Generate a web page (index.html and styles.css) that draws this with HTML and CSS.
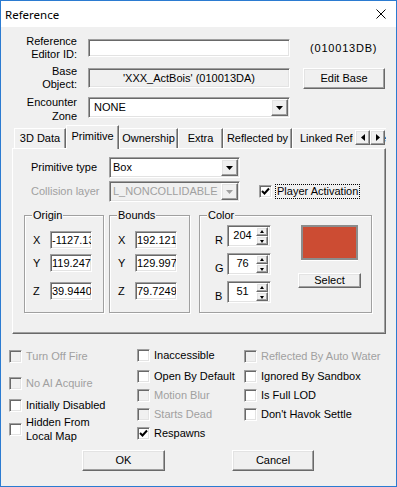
FILE: index.html
```html
<!DOCTYPE html>
<html lang="en">
<head>
  <meta charset="UTF-8" />
  <title>Reference</title>
  <link rel="stylesheet" href="styles.css">
</head>
<body>
  <div class="window">

    <!-- Title bar -->
    <div class="titlebar">
      <span class="title">Reference</span>
      <svg class="close" width="10" height="10" viewBox="0 0 10 10">
        <path d="M0.5 0.5 L9.5 9.5 M9.5 0.5 L0.5 9.5" stroke="#000" stroke-width="1" fill="none"/>
      </svg>
    </div>

    <div class="dialog">

      <!-- Reference fields -->
      <div class="field-row row-editor">
        <label class="field-label">Reference<br>Editor ID:</label>
        <div class="edit edit-id"></div>
        <span class="form-id">(010013DB)</span>
      </div>
      <div class="field-row row-base">
        <label class="field-label">Base<br>Object:</label>
        <div class="edit edit-base">'XXX_ActBois' (010013DA)</div>
        <button class="btn btn-edit">Edit Base</button>
      </div>
      <div class="field-row row-zone">
        <label class="field-label">Encounter<br>Zone</label>
        <div class="combo combo-zone">
          <span>NONE</span>
          <span class="combo-btn">
            <svg width="7" height="4" viewBox="0 0 7 4"><polygon points="0,0 7,0 3.5,4" fill="#000"/></svg>
          </span>
        </div>
      </div>

      <!-- Tabs -->
      <div class="tabs">
        <div class="tabstrip">
          <div class="tab tab-3d">3D Data</div>
          <div class="tab tab-prim active">Primitive</div>
          <div class="tab tab-own">Ownership</div>
          <div class="tab tab-extra">Extra</div>
          <div class="tab tab-refl">Reflected by</div>
          <div class="tab tab-linked">Linked Reference</div>
        </div>
        <div class="tab-scroll">
          <span class="scroll-btn">
            <svg width="4" height="7" viewBox="0 0 4 7"><polygon points="4,0 4,7 0,3.5" fill="#000"/></svg>
          </span>
          <span class="scroll-btn">
            <svg width="4" height="7" viewBox="0 0 4 7"><polygon points="0,0 0,7 4,3.5" fill="#000"/></svg>
          </span>
        </div>

        <div class="tab-panel">
          <div class="prop-row">
            <span class="prop-label">Primitive type</span>
            <div class="combo combo-prop">
              <span>Box</span>
              <span class="combo-btn">
                <svg width="7" height="4" viewBox="0 0 7 4"><polygon points="0,0 7,0 3.5,4" fill="#000"/></svg>
              </span>
            </div>
          </div>
          <div class="prop-row">
            <span class="prop-label disabled">Collision layer</span>
            <div class="combo combo-prop is-disabled">
              <span class="combo-text">L_NONCOLLIDABLE</span>
              <span class="combo-btn">
                <svg width="7" height="4" viewBox="0 0 7 4"><polygon points="0,0 7,0 3.5,4" fill="#a0a0a0"/></svg>
              </span>
            </div>
            <div class="check check-player">
              <span class="cb checked">
                <svg width="9" height="9" viewBox="0 0 9 9"><path d="M1 4 L3.5 6.5 L8 1.5" stroke="#000" stroke-width="2" fill="none"/></svg>
              </span>
              <span class="focus">Player Activation</span>
            </div>
          </div>

          <div class="groups">
            <div class="group group-origin">
              <span class="group-title">Origin</span>
              <div class="axis-row"><span class="axis-label">X</span><div class="num">-1127.1304</div></div>
              <div class="axis-row"><span class="axis-label">Y</span><div class="num">119.2470</div></div>
              <div class="axis-row axis-z"><span class="axis-label">Z</span><div class="num">39.9440</div></div>
            </div>
            <div class="group group-bounds">
              <span class="group-title">Bounds</span>
              <div class="axis-row"><span class="axis-label">X</span><div class="num">192.1210</div></div>
              <div class="axis-row"><span class="axis-label">Y</span><div class="num">129.9970</div></div>
              <div class="axis-row axis-z"><span class="axis-label">Z</span><div class="num">79.7249</div></div>
            </div>
            <div class="group group-color">
              <span class="group-title">Color</span>
              <div class="spin-col">
                <div class="spin-row">
                  <span class="spin-label">R</span>
                  <div class="spin"><span class="spin-value">204</span><span class="spin-btns"><span class="spin-up"></span><span class="spin-down"></span></span></div>
                </div>
                <div class="spin-row">
                  <span class="spin-label">G</span>
                  <div class="spin"><span class="spin-value">76</span><span class="spin-btns"><span class="spin-up"></span><span class="spin-down"></span></span></div>
                </div>
                <div class="spin-row">
                  <span class="spin-label">B</span>
                  <div class="spin"><span class="spin-value">51</span><span class="spin-btns"><span class="spin-up"></span><span class="spin-down"></span></span></div>
                </div>
              </div>
              <div class="color-side">
                <div class="swatch"></div>
                <button class="btn btn-select">Select</button>
              </div>
            </div>
          </div>
        </div>
      </div>

      <!-- Flags -->
      <div class="flags">
        <div class="flag-col col-1">
          <div class="check disabled"><span class="cb"></span>Turn Off Fire</div>
          <div class="check disabled gap-14"><span class="cb"></span>No AI Acquire</div>
          <div class="check gap-9"><span class="cb"></span>Initially Disabled</div>
          <div class="check two-line gap-3"><span class="cb"></span><span>Hidden From<br>Local Map</span></div>
        </div>
        <div class="flag-col col-2">
          <div class="check"><span class="cb"></span>Inaccessible</div>
          <div class="check gap-8"><span class="cb"></span>Open By Default</div>
          <div class="check disabled gap-6"><span class="cb"></span>Motion Blur</div>
          <div class="check disabled gap-6"><span class="cb"></span>Starts Dead</div>
          <div class="check gap-6">
            <span class="cb checked">
              <svg width="9" height="9" viewBox="0 0 9 9"><path d="M1 4 L3.5 6.5 L8 1.5" stroke="#000" stroke-width="2" fill="none"/></svg>
            </span>Respawns
          </div>
        </div>
        <div class="flag-col col-3">
          <div class="check disabled"><span class="cb"></span>Reflected By Auto Water</div>
          <div class="check gap-7"><span class="cb"></span>Ignored By Sandbox</div>
          <div class="check gap-6"><span class="cb"></span>Is Full LOD</div>
          <div class="check gap-6"><span class="cb"></span>Don't Havok Settle</div>
        </div>
      </div>

      <!-- Buttons -->
      <div class="actions">
        <button class="btn btn-ok">OK</button>
        <button class="btn btn-cancel">Cancel</button>
      </div>
    </div>
  </div>
</body>
</html>
```

FILE: styles.css
```css
/* --------------------------------
   Reset / Basic
----------------------------------- */
* {
  margin: 0;
  padding: 0;
  box-sizing: border-box;
}
html, body {
  width: 397px;
  height: 487px;
  overflow: hidden;
  background: #fff;
}
body {
  font-family: "Liberation Sans", Arial, sans-serif;
  font-size: 11px;
  line-height: 13px;
  color: #000;
}
button {
  font: inherit;
  color: inherit;
}

/* --------------------------------
   Window frame
----------------------------------- */
.window {
  width: 397px;
  height: 487px;
  border: 1px solid #2b7bd1;
  display: flex;
  flex-direction: column;
}
.titlebar {
  flex: none;
  height: 26px;
  background: #fff;
  display: flex;
  align-items: center;
  justify-content: space-between;
  padding: 0 10px 0 4px;
}
.title {
  font-family: "Noto Sans", "Liberation Sans", sans-serif;
  font-size: 11.5px;
}
.close {
  display: block;
}
.dialog {
  flex: 1;
  background: #f0f0f0;
  padding-top: 8px;
}

/* --------------------------------
   Classic 3D controls
----------------------------------- */
.edit,
.combo,
.num,
.spin,
.cb {
  background: #fff;
  border: 1px solid;
  border-color: #a0a0a0 #fff #fff #a0a0a0;
  box-shadow: inset 1px 1px #696969, inset -1px -1px #e3e3e3;
}
.btn,
.combo-btn,
.scroll-btn,
.spin-up,
.spin-down {
  background: #f0f0f0;
  border: 1px solid;
  border-color: #fff #696969 #696969 #fff;
  box-shadow: inset -1px -1px #a0a0a0, inset 1px 1px #e3e3e3;
}
.btn {
  text-align: center;
  cursor: default;
}
.disabled {
  color: #a0a0a0;
}

/* --------------------------------
   Top fields
----------------------------------- */
.field-row {
  display: flex;
  align-items: center;
  height: 26px;
}
.row-base {
  margin-top: 4px;
}
.row-zone {
  margin-top: 3px;
}
.field-label {
  width: 76px;
  text-align: right;
}
.row-zone .field-label {
  line-height: 14px;
  padding-top: 3px;
}
.edit {
  width: 202px;
  margin-left: 11px;
}
.edit-id {
  height: 18px;
}
.edit-base {
  height: 20px;
  background: #f0f0f0;
  text-align: center;
  line-height: 18px;
  white-space: nowrap;
}
.form-id {
  margin-left: 20px;
  letter-spacing: 0.8px;
}
.btn-edit {
  width: 82px;
  height: 21px;
  margin-left: 13px;
}

.combo {
  display: flex;
  align-items: center;
  justify-content: space-between;
  height: 21px;
  padding: 0 1px 0 4px;
  overflow: hidden;
}
.combo-zone {
  width: 202px;
  margin-left: 11px;
  padding-left: 5px;
}
.combo-btn {
  flex: none;
  width: 17px;
  height: 17px;
  display: flex;
  align-items: center;
  justify-content: center;
}
.combo-btn svg {
  display: block;
  margin-top: 1px;
}
.combo.is-disabled {
  background: #f0f0f0;
  color: #a0a0a0;
}
.combo-text {
  white-space: nowrap;
  overflow: hidden;
}

/* --------------------------------
   Tabs
----------------------------------- */
.tabs {
  position: relative;
  width: 374px;
  margin: 5px 0 0 11px;
}
.tabstrip {
  position: relative;
  z-index: 1;
  display: flex;
  align-items: flex-start;
  height: 24px;
  margin-bottom: -1px;
  padding-left: 2px;
  overflow: hidden;
}
.tab {
  flex: none;
  height: 20px;
  margin-top: 3px;
  text-align: center;
  line-height: 18px;
  white-space: nowrap;
  border-top: 1px solid #fff;
  border-left: 1px solid #fff;
  border-right: 1px solid #696969;
  box-shadow: inset -1px 0 #a0a0a0;
}
.tab.active {
  height: 24px;
  margin-top: 0;
  line-height: 21px;
  background: #f0f0f0;
}
.tab-3d { width: 52px; }
.tab-prim { width: 53px; }
.tab-own { width: 59px; }
.tab-extra { width: 45px; }
.tab-refl { width: 69px; }
.tab-linked {
  width: 100px;
  text-align: left;
  padding-left: 7px;
}
.tab-scroll {
  position: absolute;
  z-index: 2;
  top: 5px;
  right: 1px;
  display: flex;
  padding-left: 2px;
  background: #f0f0f0;
}
.scroll-btn {
  width: 15px;
  height: 15px;
  display: flex;
  align-items: center;
  justify-content: center;
}
.tab-panel {
  height: 186px;
  border: 1px solid;
  border-color: #fff #696969 #696969 #fff;
  box-shadow: inset -1px -1px #a0a0a0;
  padding: 8px 0 0 11px;
}

/* --------------------------------
   Primitive page
----------------------------------- */
.prop-row {
  display: flex;
  align-items: center;
  height: 21px;
  padding-left: 7px;
}
.prop-row + .prop-row {
  margin-top: 3px;
}
.prop-label {
  width: 78px;
}
.combo-prop {
  width: 131px;
  padding-left: 3px;
}
.check {
  display: flex;
  align-items: center;
  white-space: nowrap;
}
.cb {
  flex: none;
  width: 13px;
  height: 13px;
  margin-right: 4px;
  display: flex;
  align-items: center;
  justify-content: center;
}
.check.disabled .cb {
  background: #f0f0f0;
}
.check-player {
  margin-left: 19px;
}
.focus {
  outline: 1px dotted #000;
  padding: 0 1px;
}

.groups {
  display: flex;
  margin-top: 13px;
}
.group {
  position: relative;
  height: 98px;
  border: 1px solid #a0a0a0;
  box-shadow: inset 1px 1px #fff, 1px 1px #fff;
}
.group-title {
  position: absolute;
  top: -7px;
  left: 7px;
  padding: 0 1px;
  background: #f0f0f0;
}
.group-origin,
.group-bounds {
  padding: 15px 0 0 7px;
}
.group-origin { width: 80px; }
.group-bounds {
  width: 81px;
  margin-left: 5px;
}
.axis-row {
  display: flex;
  align-items: center;
  height: 18px;
}
.axis-row + .axis-row {
  margin-top: 5px;
}
.axis-row.axis-z {
  margin-top: 10px;
}
.axis-label {
  width: 18px;
  padding-left: 1px;
}
.num {
  width: 42px;
  height: 18px;
  padding-left: 1px;
  line-height: 16px;
  white-space: nowrap;
  overflow: hidden;
}

.group-color {
  width: 173px;
  margin-left: 9px;
  display: flex;
  padding: 9px 0 0 15px;
}
.spin-col {
  display: flex;
  flex-direction: column;
  gap: 6px;
}
.spin-row {
  display: flex;
  align-items: flex-end;
}
.spin-label {
  width: 12px;
}
.spin {
  width: 44px;
  height: 22px;
  display: flex;
  padding: 1px;
}
.spin-value {
  flex: 1;
  text-align: center;
  padding-top: 2px;
}
.spin-btns {
  width: 12px;
  margin-right: 1px;
  display: flex;
  flex-direction: column;
}
.spin-up,
.spin-down {
  position: relative;
  height: 9px;
}
.spin-up::after,
.spin-down::after {
  content: "";
  position: absolute;
  left: 3px;
  border-left: 2.5px solid transparent;
  border-right: 2.5px solid transparent;
}
.spin-up::after {
  top: 2px;
  border-bottom: 3px solid #000;
}
.spin-down::after {
  top: 3px;
  border-top: 3px solid #000;
}
.color-side {
  width: 63px;
  margin-left: 27px;
  display: flex;
  flex-direction: column;
  align-items: center;
}
.swatch {
  width: 57px;
  height: 35px;
  background: #cc4c33;
  border: 2px solid #8c8c8c;
  box-shadow: 0 1px #fff;
}
.btn-select {
  width: 63px;
  height: 15px;
  margin-top: 13px;
  line-height: 11px;
}

/* --------------------------------
   Flags
----------------------------------- */
.flags {
  display: flex;
  height: 116px;
  padding: 15px 0 0 8px;
}
.flag-col {
  display: flex;
  flex-direction: column;
}
.col-1 {
  width: 128px;
  padding-top: 1px;
}
.col-2 {
  width: 107px;
}
.col-3 {
  padding-top: 1px;
}
.two-line span:last-child {
  line-height: 14px;
}
.gap-3 { margin-top: 3px; }
.gap-6 { margin-top: 6px; }
.gap-7 { margin-top: 7px; }
.gap-8 { margin-top: 8px; }
.gap-9 { margin-top: 9px; }
.gap-14 { margin-top: 14px; }

/* --------------------------------
   OK / Cancel
----------------------------------- */
.actions {
  display: flex;
  gap: 67px;
  padding-left: 81px;
}
.btn-ok {
  width: 83px;
  height: 21px;
}
.btn-cancel {
  width: 82px;
  height: 21px;
}
```
